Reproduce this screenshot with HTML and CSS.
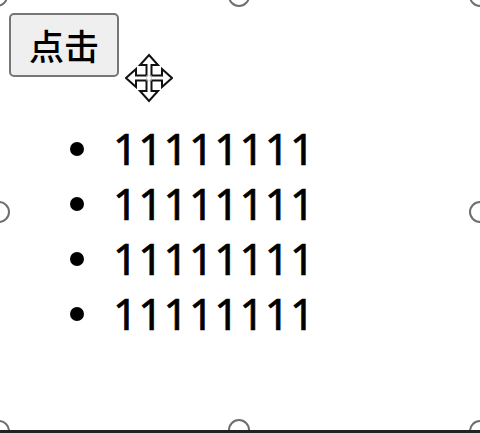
FILE: index.html
```html
<!DOCTYPE html>
<html>
<head>
<meta charset="utf-8">
<link rel="stylesheet" href="styles.css">
</head>
<body>
<div class="frame">
  <button class="btn">点击</button>
  <ul class="list">
    <li class="item"><span class="dot"></span><span class="txt">11111111</span></li>
    <li class="item"><span class="dot"></span><span class="txt">11111111</span></li>
    <li class="item"><span class="dot"></span><span class="txt">11111111</span></li>
    <li class="item"><span class="dot"></span><span class="txt">11111111</span></li>
  </ul>
  <svg class="move" width="48" height="50" viewBox="0 0 48 50">
    <path d="M24 2 L33 12 L26.5 12 L26.5 22.5 L37 22.5 L37 16 L47 25 L37 34 L37 27.5 L26.5 27.5 L26.5 38 L33 38 L24 48 L15 38 L21.5 38 L21.5 27.5 L11 27.5 L11 34 L1 25 L11 16 L11 22.5 L21.5 22.5 L21.5 12 L15 12 Z" fill="#fff" stroke="#111" stroke-width="2" stroke-linejoin="miter"/>
    <path d="M21.5 22.5 L26.5 22.5 L26.5 27.5 L21.5 27.5 Z" fill="none" stroke="#bbb" stroke-width="0.6"/>
  </svg>
  <span class="handle h-tl"></span>
  <span class="handle h-tc"></span>
  <span class="handle h-tr"></span>
  <span class="handle h-ml"></span>
  <span class="handle h-mr"></span>
  <span class="handle h-bl"></span>
  <span class="handle h-bc"></span>
  <span class="handle h-br"></span>
</div>
</body>
</html>
```
FILE: styles.css
```css
html, body {
  margin: 0;
  padding: 0;
  background: #fff;
}
.frame {
  position: relative;
  width: 480px;
  height: 433px;
  overflow: hidden;
  box-sizing: border-box;
  border-bottom: 3px solid #222;
  padding: 13px 0 0 9px;
  font-family: "Noto Sans", sans-serif;
}
.btn {
  display: block;
  box-sizing: border-box;
  width: 110px;
  height: 64px;
  margin: 0;
  padding: 0 0 2px 0;
  border: 2px solid #767676;
  border-radius: 5px;
  background: #efefef;
  color: #000;
  font-family: "Noto Sans CJK SC", sans-serif;
  font-size: 35px;
  font-weight: 500;
  line-height: 1;
}
.list {
  list-style: none;
  margin: 44px 0 0 0;
  padding: 0 0 0 61px;
}
.item {
  display: flex;
  align-items: center;
  height: 55px;
  font-size: 43px;
  line-height: 55px;
  color: #000;
}
.dot {
  width: 14px;
  height: 14px;
  border-radius: 50%;
  background: #000;
  flex: none;
}
.txt {
  margin-left: 29px;
  letter-spacing: 0.7px;
  -webkit-text-stroke: 0.7px #000;
}
.move {
  position: absolute;
  left: 125px;
  top: 53px;
}
.handle {
  position: absolute;
  width: 22px;
  height: 22px;
  box-sizing: border-box;
  border: 2px solid #6e6e6e;
  border-radius: 50%;
}
.h-tl { left: -14px; top: -15px; }
.h-tc { left: 228px; top: -15px; }
.h-tr { left: 469px; top: -15px; }
.h-ml { left: -12px; top: 201px; }
.h-mr { left: 469px; top: 201px; }
.h-bl { left: -12px; top: 420px; }
.h-bc { left: 228px; top: 419px; }
.h-br { left: 469px; top: 420px; }
```
